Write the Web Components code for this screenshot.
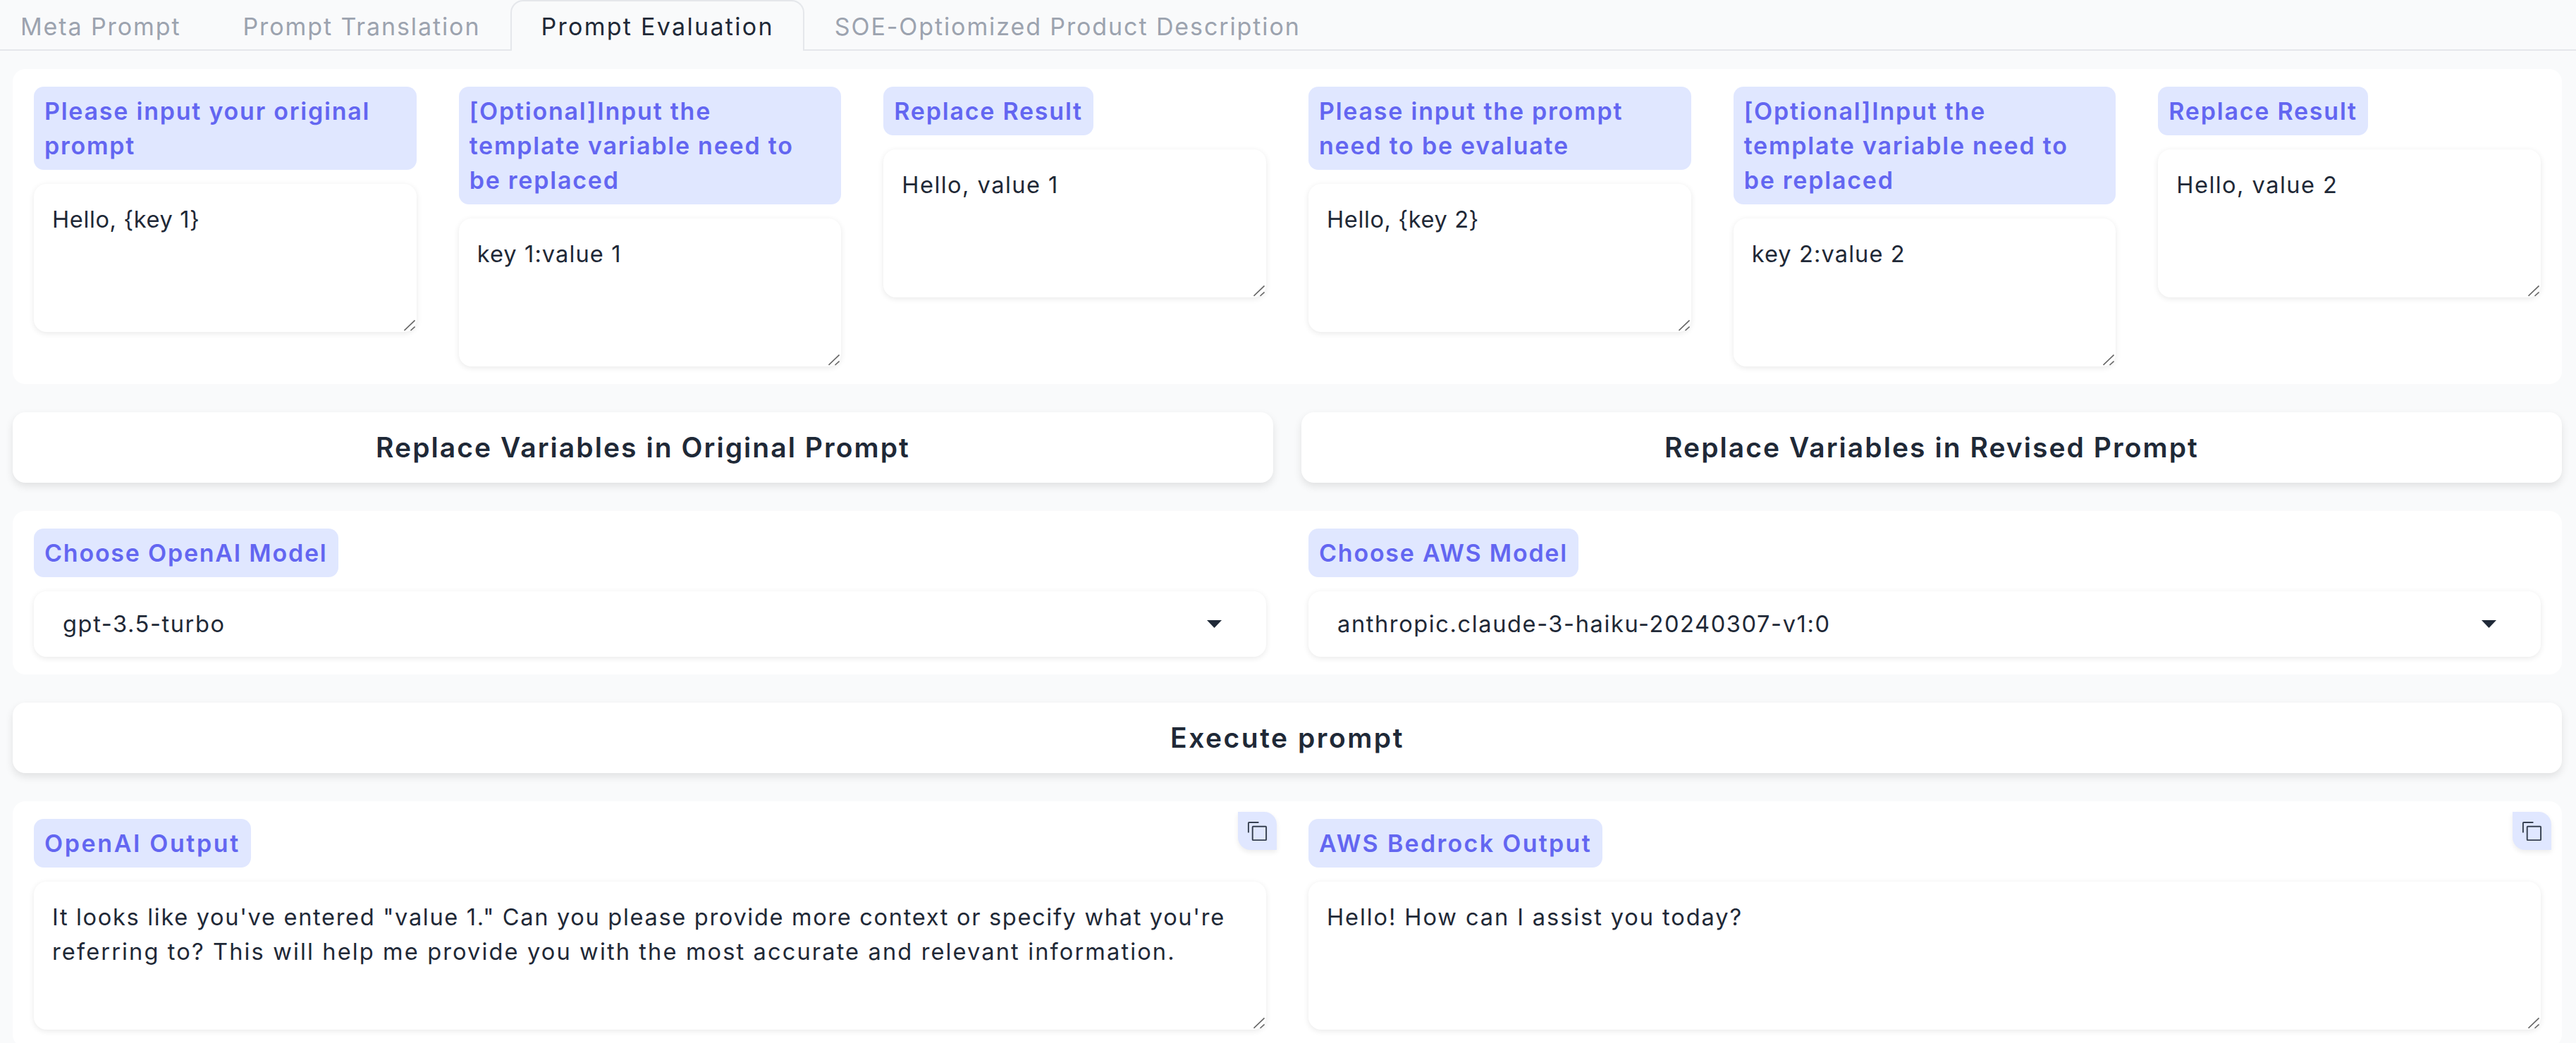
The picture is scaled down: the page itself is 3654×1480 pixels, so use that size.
<!DOCTYPE html>
<html>
<head>
<meta charset="utf-8">
<style>
html, body { margin: 0; height: 1480px; overflow: hidden; background: #f9fafb; }
body {
    font-family: Inter, "Open Sans", sans-serif;
    font-size: 32.6px;
    line-height: 49px;
    letter-spacing: 1.1px;
    color: #1f2937;
}
</style>
</head>
<body>
<eval-page>
    <tab-bar>
        <tab-item>Meta Prompt</tab-item>
        <tab-item>Prompt Translation</tab-item>
        <tab-item active>Prompt Evaluation</tab-item>
        <tab-item>SOE-Optiomized Product Description</tab-item>
    </tab-bar>
    <panel-card columns="6">
        <text-field><field-label>Please input your original<br>prompt</field-label><text-box style="letter-spacing:.6px">Hello, {key 1}</text-box></text-field>
        <text-field><field-label>[Optional]Input the<br>template variable need to<br>be replaced</field-label><text-box>key 1:value 1</text-box></text-field>
        <text-field><field-label>Replace Result</field-label><text-box style="letter-spacing:1.45px">Hello, value 1</text-box></text-field>
        <text-field><field-label>Please input the prompt<br>need to be evaluate</field-label><text-box style="letter-spacing:.6px">Hello, {key 2}</text-box></text-field>
        <text-field><field-label>[Optional]Input the<br>template variable need to<br>be replaced</field-label><text-box>key 2:value 2</text-box></text-field>
        <text-field><field-label>Replace Result</field-label><text-box style="letter-spacing:1.45px">Hello, value 2</text-box></text-field>
    </panel-card>
    <button-row>
        <big-button>Replace Variables in Original Prompt</big-button>
        <big-button>Replace Variables in Revised Prompt</big-button>
    </button-row>
    <panel-card columns="2">
        <text-field><field-label>Choose OpenAI Model</field-label><select-box>gpt-3.5-turbo</select-box></text-field>
        <text-field><field-label>Choose AWS Model</field-label><select-box>anthropic.claude-3-haiku-20240307-v1:0</select-box></text-field>
    </panel-card>
    <button-row>
        <big-button style="letter-spacing:2.5px">Execute prompt</big-button>
    </button-row>
    <panel-card columns="2">
        <text-field copy><field-label style="letter-spacing:2.6px">OpenAI Output</field-label><text-box><span style="letter-spacing:1.67px">It looks like you've entered "value 1." Can you please provide more context or specify what you're</span><br><span style="letter-spacing:2.12px">referring to? This will help me provide you with the most accurate and relevant information.</span></text-box></text-field>
        <text-field copy><field-label style="letter-spacing:2.3px">AWS Bedrock Output</field-label><text-box style="letter-spacing:1.9px">Hello! How can I assist you today?</text-box></text-field>
    </panel-card>
</eval-page>

<script>
// Small helper so every element below stays a few lines long.
function shadowFrom(host, html) {
    const template = document.createElement('template');
    template.innerHTML = html;
    host.attachShadow({mode: 'open'});
    host.shadowRoot.appendChild(template.content.cloneNode(true));
}

class EvalPage extends HTMLElement {
    constructor() {
        super();
        shadowFrom(this, `
<style>
:host { display: block; }
.content { display: flex; flex-direction: column; gap: 40px; padding: 26px 20px 0 18px; }
</style>
<slot name="tabs"></slot>
<div class="content"><slot></slot></div>
`);
    }

    connectedCallback() {
        this.querySelector('tab-bar').slot = 'tabs';
    }
}

class TabBar extends HTMLElement {
    constructor() {
        super();
        shadowFrom(this, `
<style>
:host { display: flex; height: 72px; box-sizing: border-box; border-bottom: 2px solid #e5e7eb; }
</style>
<slot></slot>
`);
    }
}

class TabItem extends HTMLElement {
    constructor() {
        super();
        shadowFrom(this, `
<style>
:host {
    display: block;
    box-sizing: border-box;
    height: 72px;
    padding: 11px 43px 0;
    color: #9ca3af;
    font-size: 34px;
    letter-spacing: 1.9px;
    border: 2px solid transparent;
    border-bottom: none;
    margin-left: -2px;
    white-space: nowrap;
}
:host(:first-child) { padding-left: 27px; margin-left: 0; }
:host([active]) {
    padding: 11px 41px 0;
    letter-spacing: 2.3px;
    color: #1f2937;
    background: #f9fafb;
    border-color: #e5e7eb;
    border-radius: 18px 18px 0 0;
}
</style>
<slot></slot>
`);
    }
}

class PanelCard extends HTMLElement {
    constructor() {
        super();
        shadowFrom(this, `
<style>
:host {
    display: grid;
    grid-template-columns: repeat(var(--cols, 1), minmax(0, 1fr));
    column-gap: 60px;
    align-items: start;
    padding: 25px 30px;
    background: #fff;
    border-radius: 18px;
}
</style>
<slot></slot>
`);
    }

    connectedCallback() {
        this.style.setProperty('--cols', this.getAttribute('columns'));
    }
}

class TextField extends HTMLElement {
    constructor() {
        super();
        shadowFrom(this, `
<style>
:host { display: flex; flex-direction: column; align-items: flex-start; gap: 20px; position: relative; }
.copy {
    display: none;
    position: absolute;
    top: -10px;
    right: -15px;
    width: 55px;
    height: 54px;
    align-items: center;
    justify-content: center;
    background: #e0e7ff;
    color: #374151;
    border-radius: 0 18px 0 18px;
    box-shadow: 0 3px 7px rgba(0, 0, 0, .08);
}
:host([copy]) .copy { display: flex; }
svg { width: 31px; height: 31px; }
</style>
<slot></slot>
<div class="copy">
    <svg viewBox="0 0 32 32"><path fill="currentColor" d="M28 10v18H10V10h18m0-2H10a2 2 0 0 0-2 2v18a2 2 0 0 0 2 2h18a2 2 0 0 0 2-2V10a2 2 0 0 0-2-2Z"/><path fill="currentColor" d="M4 18H2V4a2 2 0 0 1 2-2h14v2H4Z"/></svg>
</div>
`);
    }
}

class FieldLabel extends HTMLElement {
    constructor() {
        super();
        shadowFrom(this, `
<style>
:host {
    display: block;
    padding: 10px 15px;
    background: #e0e7ff;
    color: #6366f1;
    font-size: 34px;
    letter-spacing: 1.77px;
    font-weight: 600;
    border-radius: 14px;
}
</style>
<slot></slot>
`);
    }

    connectedCallback() {
        // Multi line labels take the whole column, like a wrapped label does.
        if (this.querySelector('br')) {
            this.style.alignSelf = 'stretch';
        }
    }
}

class TextBox extends HTMLElement {
    constructor() {
        super();
        shadowFrom(this, `
<style>
:host {
    display: block;
    position: relative;
    align-self: stretch;
    box-sizing: border-box;
    height: 210px;
    padding: 26px 26px 0;
    background: #fff;
    border-radius: 18px;
    box-shadow: 0 2px 8px rgba(0, 0, 0, .09);
}
svg { position: absolute; right: 2px; bottom: 1px; width: 16px; height: 16px; }
</style>
<slot></slot>
<svg viewBox="0 0 16 16"><path stroke="#666" stroke-width="1.6" fill="none" d="M0.5 15 15.5 0.5M9.5 15 15.5 9.5"/></svg>
`);
    }
}

class SelectBox extends HTMLElement {
    constructor() {
        super();
        shadowFrom(this, `
<style>
:host {
    display: flex;
    align-items: center;
    justify-content: space-between;
    align-self: stretch;
    box-sizing: border-box;
    height: 93px;
    padding: 0 63px 0 41px;
    letter-spacing: 1.6px;
    background: #fff;
    border-radius: 18px;
    box-shadow: 0 2px 8px rgba(0, 0, 0, .09);
}
svg { width: 21px; height: 11px; fill: #1f2937; }
</style>
<span><slot></slot></span>
<svg viewBox="0 0 21 11"><path d="M0 0H21L10.5 11Z"/></svg>
`);
    }
}

class ButtonRow extends HTMLElement {
    constructor() {
        super();
        shadowFrom(this, `
<style>
:host { display: flex; gap: 40px; }
</style>
<slot></slot>
`);
    }
}

class BigButton extends HTMLElement {
    constructor() {
        super();
        shadowFrom(this, `
<style>
:host {
    flex: 1;
    display: flex;
    align-items: center;
    justify-content: center;
    box-sizing: border-box;
    height: 100px;
    padding-bottom: 2px;
    background: #fff;
    font-size: 39px;
    letter-spacing: 2.05px;
    font-weight: 600;
    border-radius: 18px;
    box-shadow: 0 5px 12px rgba(0, 0, 0, .1);
}
</style>
<slot></slot>
`);
    }
}

customElements.define('eval-page', EvalPage);
customElements.define('tab-bar', TabBar);
customElements.define('tab-item', TabItem);
customElements.define('panel-card', PanelCard);
customElements.define('text-field', TextField);
customElements.define('field-label', FieldLabel);
customElements.define('text-box', TextBox);
customElements.define('select-box', SelectBox);
customElements.define('button-row', ButtonRow);
customElements.define('big-button', BigButton);
</script>
</body>
</html>
